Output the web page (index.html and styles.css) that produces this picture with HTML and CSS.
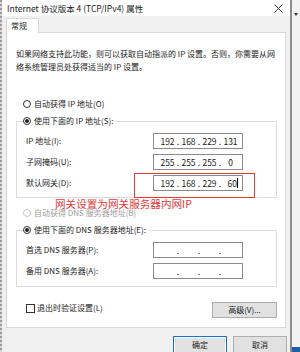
FILE: index.html
```
<!DOCTYPE html>
<html>
<head>
	<meta charset='utf-8'/>
	<title>Internet 协议版本 4 (TCP/IPv4) 属性</title>
	<link rel="stylesheet" href="styles.css">
</head>
<body>
	<div class="screen">
		<div class="edge"></div>
		<div class="dialog">
			<div class="titlebar">
				<span class="title">Internet 协议版本 4 (TCP/IPv4) 属性</span>
				<svg class="close" width="9" height="9" viewBox="0 0 9 9"><path d="M0.5 0.5L8.5 8.5M8.5 0.5L0.5 8.5" stroke="#333" stroke-width="1"/></svg>
			</div>
			<div class="tabs">
				<span class="tab">常规</span>
			</div>
			<div class="panel">
				<p class="intro">如果网络支持此功能，则可以获取自动指派的 IP 设置。否则，你需要从网<br>络系统管理员处获得适当的 IP 设置。</p>

				<div class="radio first"><span class="dot"></span>自动获得 IP 地址(O)</div>
				<fieldset class="group ipgroup">
					<legend><span class="radio"><span class="dot on"></span>使用下面的 IP 地址(S):</span></legend>
					<div class="row"><label>IP 地址(I):</label><span class="ip"><b>192</b>.<b>168</b>.<b>229</b>.<b>131</b></span></div>
					<div class="row"><label>子网掩码(U):</label><span class="ip"><b>255</b>.<b>255</b>.<b>255</b>.<b>0</b></span></div>
					<div class="row"><label>默认网关(D):</label><span class="ip"><b>192</b>.<b>168</b>.<b>229</b>.<b class="caret">60</b></span></div>
					<div class="mark"></div>
					<div class="note">网关设置为网关服务器内网IP</div>
				</fieldset>

				<div class="radio off"><span class="dot"></span>自动获得 DNS 服务器地址(B)</div>
				<fieldset class="group dnsgroup">
					<legend><span class="radio"><span class="dot on"></span>使用下面的 DNS 服务器地址(E):</span></legend>
					<div class="row"><label>首选 DNS 服务器(P):</label><span class="ip"><b></b>.<b></b>.<b></b>.<b></b></span></div>
					<div class="row"><label>备用 DNS 服务器(A):</label><span class="ip"><b></b>.<b></b>.<b></b>.<b></b></span></div>
				</fieldset>

				<div class="bottom">
					<label class="check"><span class="box"></span>退出时验证设置(L)</label>
					<span class="btn">高级(V)...</span>
				</div>
			</div>
			<div class="actions">
				<span class="btn main">确定</span>
				<span class="btn">取消</span>
			</div>
		</div>
		<div class="divider"></div>
		<div class="rest">
			<span class="arrow"></span>
			<span class="taskbar"></span>
		</div>
	</div>
</body>
</html>
```
FILE: styles.css
```
*{
	margin: 0;
	padding: 0;
	box-sizing: border-box;
}
body{
	font-family: "Noto Sans CJK SC", "Liberation Sans", sans-serif;
	font-size: 8px;
	color: #1a1a1a;
	background: #f0f0f0;
}
.screen{
	display: flex;
	width: 300px;
	height: 352px;
	overflow: hidden;
}
.edge{
	width: 2px;
	background: repeating-linear-gradient(#9a9a9a 0 2px, #d8d8d8 2px 4px);
}
.dialog{
	width: 288px;
	background: #f0f0f0;
}
.titlebar{
	height: 16px;
	background: #fff;
	display: flex;
	align-items: center;
	justify-content: space-between;
	padding: 0 6px 0 5px;
	font-size: 8.5px;
	line-height: 16px;
}
.close{
	margin-right: 1px;
}
.tabs{
	display: flex;
	padding-left: 4px;
	height: 16px;
	align-items: flex-end;
}
.tab{
	width: 33px;
	height: 15px;
	background: #fff;
	border: 1px solid #d9d9d9;
	border-bottom: none;
	padding-left: 4px;
	line-height: 14px;
	position: relative;
	top: 1px;
}
.panel{
	margin-left: 4px;
	width: 280px;
	height: 296px;
	background: #fff;
	border: 1px solid #d9d9d9;
	padding: 14px 8px 0 9px;
}
.intro{
	line-height: 13px;
}
.radio{
	display: flex;
	align-items: center;
	height: 14px;
	line-height: 14px;
	padding-left: 7px;
	background: #fff;
}
.radio.first{
	margin-top: 24px;
}
.dot{
	width: 8px;
	height: 8px;
	border: 1px solid #333;
	border-radius: 50%;
	margin-right: 3px;
	flex: none;
	position: relative;
}
.dot.on::after{
	content: "";
	position: absolute;
	left: 1px;
	top: 1px;
	width: 4px;
	height: 4px;
	border-radius: 50%;
	background: #222;
}
.radio.off{
	color: #9d9d9d;
	margin-top: 8px;
}
.radio.off .dot{
	border-color: #c4c4c4;
}
.group{
	border: 1px solid #dcdcdc;
	padding: 0 0 0 9px;
	position: relative;
}
.group legend{
	margin-left: -3px;
	padding: 0 2px 0 0;
}
.group legend .radio{
	padding-left: 0;
	padding-right: 1px;
}
.ipgroup{
	height: 84px;
	margin-top: 3px;
}
.dnsgroup{
	height: 64px;
	margin-top: 3px;
}
.row{
	display: flex;
	align-items: center;
	justify-content: space-between;
	height: 21px;
	padding-right: 33px;
}
.row:first-of-type{
	margin-top: 2px;
}
.ip{
	display: flex;
	align-items: center;
	justify-content: space-between;
	width: 90px;
	height: 16px;
	border: 1px solid #8a8a8a;
	padding: 0 4px 0 6px;
	font-size: 8.5px;
	color: #222;
}
.ip b{
	font-weight: normal;
	width: 15px;
	text-align: center;
}
.caret{
	border-right: 1px solid #000;
	line-height: 10px;
	text-align: right !important;
}
.mark{
	position: absolute;
	left: 117px;
	top: 45px;
	width: 121px;
	height: 25px;
	border: 1.5px solid #e33a3a;
}
.note{
	position: absolute;
	left: 38px;
	top: 69px;
	font-size: 10.6px;
	line-height: 14px;
	color: #e23a3a;
	white-space: nowrap;
}
.bottom{
	display: flex;
	align-items: flex-start;
	justify-content: space-between;
	margin-top: 15px;
	padding-left: 10px;
}
.check{
	display: flex;
	align-items: center;
	height: 10px;
	line-height: 10px;
	margin-top: 1px;
}
.box{
	width: 9px;
	height: 9px;
	border: 1px solid #333;
	margin-right: 2px;
}
.btn{
	display: inline-block;
	width: 65px;
	height: 16px;
	line-height: 14px;
	text-align: center;
	background: #e1e1e1;
	border: 1px solid #adadad;
}
.actions{
	display: flex;
	justify-content: flex-end;
	gap: 6px;
	padding: 8px 3px 0 0;
}
.actions .btn{
	width: 54px;
	height: 18px;
	line-height: 15px;
}
.actions .btn.main{
	border: 1px solid #1a6fc9;
	box-shadow: inset 0 0 0 1px #fff;
}
.divider{
	width: 2px;
	background: #8c8c8c;
}
.rest{
	flex: 1;
	background: #f2f2f2;
	display: flex;
	flex-direction: column;
	justify-content: space-between;
	align-items: flex-start;
}
.arrow{
	margin: 13px 0 0 2px;
	width: 0;
	height: 0;
	border-left: 2px solid transparent;
	border-right: 2px solid transparent;
	border-top: 3px solid #333;
}
.taskbar{
	width: 100%;
	height: 5px;
	background: #1c5fa6;
}
```
